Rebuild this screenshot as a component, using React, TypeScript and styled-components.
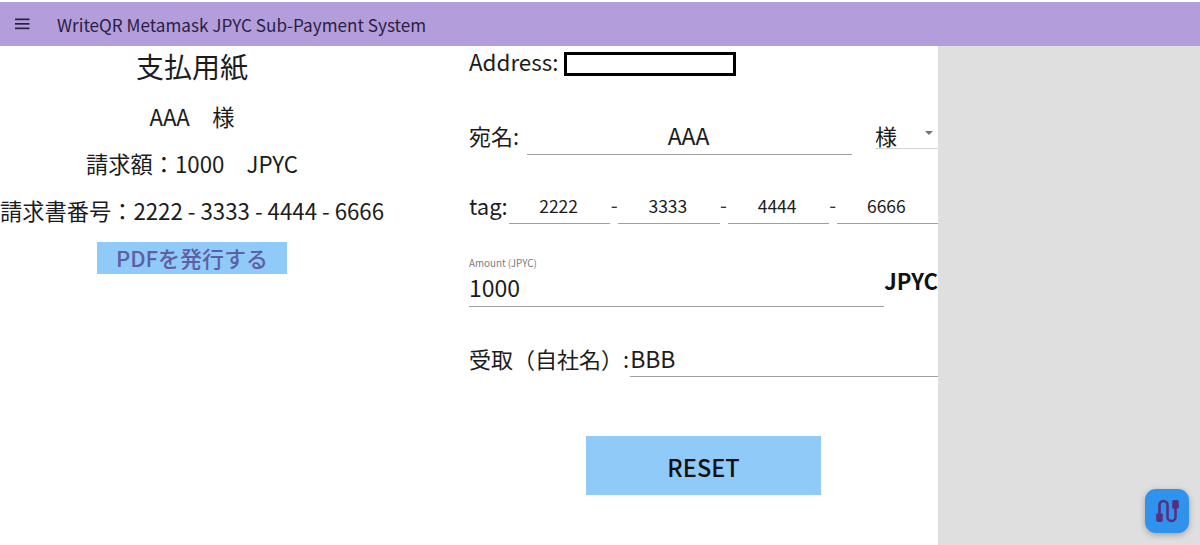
import * as React from 'react';
import styled, { createGlobalStyle } from 'styled-components';

const GlobalStyle = createGlobalStyle`
  html, body {
    margin: 0;
    padding: 0;
    background: #fff;
    height: 100%;
    overflow: hidden;
  }
  body, input, button {
    font-family: "Noto Sans CJK JP", "Noto Sans", sans-serif;
  }
  * {
    box-sizing: border-box;
  }
`;

const PageElm = styled.div`
  position: relative;
  width: 1200px;
  height: 545px;
  padding-top: 2px;
  overflow: hidden;
  color: #1c1c1c;
`;

const AppBarElm = styled.header`
  display: flex;
  align-items: center;
  height: 44px;
  padding-left: 15px;
  gap: 26px;
  background: #b39ddb;
  color: #2b2143;
`;

const AppBarTitle = styled.div`
  padding-top: 2px;
  font-size: 17.15px;
  line-height: 42px;
`;

const BodyElm = styled.main`
  display: flex;
  height: 499px;
`;

const InvoiceColumn = styled.section`
  display: flex;
  flex-direction: column;
  align-items: center;
  width: 384px;
  flex: none;
`;

const InvoiceTitle = styled.h1`
  margin: 0;
  height: 47px;
  font-size: 28px;
  font-weight: 400;
  line-height: 40px;
`;

const InvoiceLine = styled.p`
  margin: 0;
  height: 47px;
  font-size: 22.25px;
  line-height: 47px;
  white-space: pre;
`;

const PdfButton = styled.button`
  width: 190px;
  height: 32px;
  margin-top: 8px;
  padding: 0 0 2px;
  border: 0;
  background: #90caf9;
  color: #5f5fa6;
  font-size: 22px;
  font-weight: 500;
  line-height: 30px;
`;

const FormColumn = styled.section`
  display: flex;
  flex-direction: column;
  width: 469px;
  margin-left: 85px;
  flex: none;
`;

const FormRow = styled.div<{ $height: number }>`
  display: flex;
  align-items: flex-start;
  height: ${(p) => p.$height}px;
  font-size: 22px;
`;

const AddressLabel = styled.span`
  font-size: 22.4px;
  line-height: 30px;
  margin-right: 6px;
`;

const AddressBox = styled.div`
  width: 172px;
  height: 24px;
  margin-top: 6px;
  border: 3px solid #000;
`;

const FieldLabel = styled.label`
  font-size: 22px;
  line-height: 34px;
  white-space: nowrap;
`;

const LineInput = styled.input<{ $size?: number; $center?: boolean }>`
  display: block;
  min-width: 0;
  padding: 0;
  border: 0;
  border-bottom: 1px solid #a0a0a0;
  border-radius: 0;
  outline: none;
  background: transparent;
  color: #1c1c1c;
  font-size: ${(p) => p.$size ?? 23}px;
  text-align: ${(p) => (p.$center ? 'center' : 'left')};
`;

const NameInput = styled(LineInput)`
  width: 325px;
  height: 37px;
  margin-left: 8px;
  padding: 0 2px 3px 0;
`;

const HonorificSelect = styled.div`
  display: flex;
  align-items: center;
  justify-content: space-between;
  width: 63px;
  height: 31px;
  margin-left: 23px;
  padding-top: 3px;
  border-bottom: 1px solid #d4d4d4;
  font-size: 22px;
  line-height: 28px;
`;

const SelectCaret = styled.span`
  width: 0;
  height: 0;
  margin: 0 5px 3px 0;
  border-left: 4px solid transparent;
  border-right: 4px solid transparent;
  border-top: 4px solid #757575;
`;

const TagLabel = styled(FieldLabel)`
  width: 40px;
  line-height: 32px;
`;

const TagGroup = styled.div`
  display: flex;
  align-items: flex-start;
  width: 429px;
`;

const TagInput = styled(LineInput)`
  flex: 1 1 0;
  height: 35px;
  padding: 0 2px 2px 0;
`;

const TagDash = styled.span`
  width: 8px;
  font-size: 20px;
  line-height: 32px;
  text-align: center;
  color: #333;
`;

const AmountField = styled.div`
  display: flex;
  flex-direction: column;
  width: 416px;
`;

const AmountCaption = styled.span`
  height: 13px;
  font-size: 9.8px;
  line-height: 13px;
  color: #7a7a7a;
`;

const AmountInput = styled(LineInput)`
  width: 100%;
  height: 37px;
  padding-bottom: 2px;
`;

const AmountUnit = styled.span`
  margin-top: 7px;
  font-size: 22px;
  font-weight: 700;
  line-height: 32px;
  color: #111;
`;

const CompanyInput = styled(LineInput)`
  width: 308px;
  height: 36px;
  margin-left: 1px;
  padding-bottom: 2px;
`;

const ResetRow = styled.div`
  display: flex;
  padding-left: 117px;
`;

const ResetButton = styled.button`
  width: 235px;
  height: 59px;
  padding: 3px 0 0;
  border: 0;
  background: #90caf9;
  color: #111;
  font-size: 23.5px;
  font-weight: 500;
  line-height: 56px;
`;

const SidePanel = styled.aside`
  flex: 1;
  background: #dfdfdf;
`;

const CableButton = styled.button`
  position: absolute;
  left: 1145px;
  top: 489px;
  display: flex;
  align-items: center;
  justify-content: center;
  width: 44px;
  height: 44px;
  padding: 0;
  border: 0;
  border-radius: 11px;
  background: #2f93ee;
  box-shadow: 0 2px 6px rgba(0, 0, 0, 0.28);
`;

const MenuIcon = () => (
  <svg width="16" height="12" viewBox="0 0 16 12" fill="#2b2143">
    <rect x="0" y="0.5" width="14.5" height="1.7" />
    <rect x="0" y="5" width="14.5" height="1.7" />
    <rect x="0" y="9.5" width="14.5" height="1.7" />
  </svg>
);

const CableIcon = () => (
  <svg width="24" height="26" viewBox="0 0 24 26" fill="none">
    <path
      d="M4.5 16V7a4 4 0 0 1 8 0v12a4 4 0 0 0 8 0V10"
      stroke="#54307f"
      strokeWidth="2.6"
    />
    <path d="M1.2 15.5h6.6v6.5a2 2 0 0 1-2 2H3.2a2 2 0 0 1-2-2z" fill="#54307f" />
    <path d="M17.2 10.5h6.6V4a2 2 0 0 0-2-2h-2.6a2 2 0 0 0-2 2z" fill="#54307f" />
  </svg>
);

const tags = ['2222', '3333', '4444', '6666'];

const App = () => {
  return (
    <PageElm>
      <GlobalStyle />
      <AppBarElm>
        <MenuIcon />
        <AppBarTitle>WriteQR Metamask JPYC Sub-Payment System</AppBarTitle>
      </AppBarElm>
      <BodyElm>
        <InvoiceColumn>
          <InvoiceTitle>支払用紙</InvoiceTitle>
          <InvoiceLine>AAA　様</InvoiceLine>
          <InvoiceLine>請求額：1000　JPYC</InvoiceLine>
          <InvoiceLine>請求書番号：2222 - 3333 - 4444 - 6666</InvoiceLine>
          <PdfButton>PDFを発行する</PdfButton>
        </InvoiceColumn>

        <FormColumn>
          <FormRow $height={72}>
            <AddressLabel>Address:</AddressLabel>
            <AddressBox />
          </FormRow>
          <FormRow $height={71}>
            <FieldLabel>宛名:</FieldLabel>
            <NameInput $center readOnly value="AAA" />
            <HonorificSelect>
              様
              <SelectCaret />
            </HonorificSelect>
          </FormRow>
          <FormRow $height={68}>
            <TagLabel>tag:</TagLabel>
            <TagGroup>
              {tags.map((tag, i) => (
                <React.Fragment key={tag}>
                  {i > 0 && <TagDash>-</TagDash>}
                  <TagInput $size={17.5} $center readOnly value={tag} />
                </React.Fragment>
              ))}
            </TagGroup>
          </FormRow>
          <FormRow $height={84}>
            <AmountField>
              <AmountCaption>Amount (JPYC)</AmountCaption>
              <AmountInput readOnly value="1000" />
            </AmountField>
            <AmountUnit>JPYC</AmountUnit>
          </FormRow>
          <FormRow $height={95}>
            <FieldLabel>受取（自社名）:</FieldLabel>
            <CompanyInput readOnly value="BBB" />
          </FormRow>
          <ResetRow>
            <ResetButton>RESET</ResetButton>
          </ResetRow>
        </FormColumn>

        <SidePanel />
      </BodyElm>
      <CableButton aria-label="connect">
        <CableIcon />
      </CableButton>
    </PageElm>
  );
};

export default App;
